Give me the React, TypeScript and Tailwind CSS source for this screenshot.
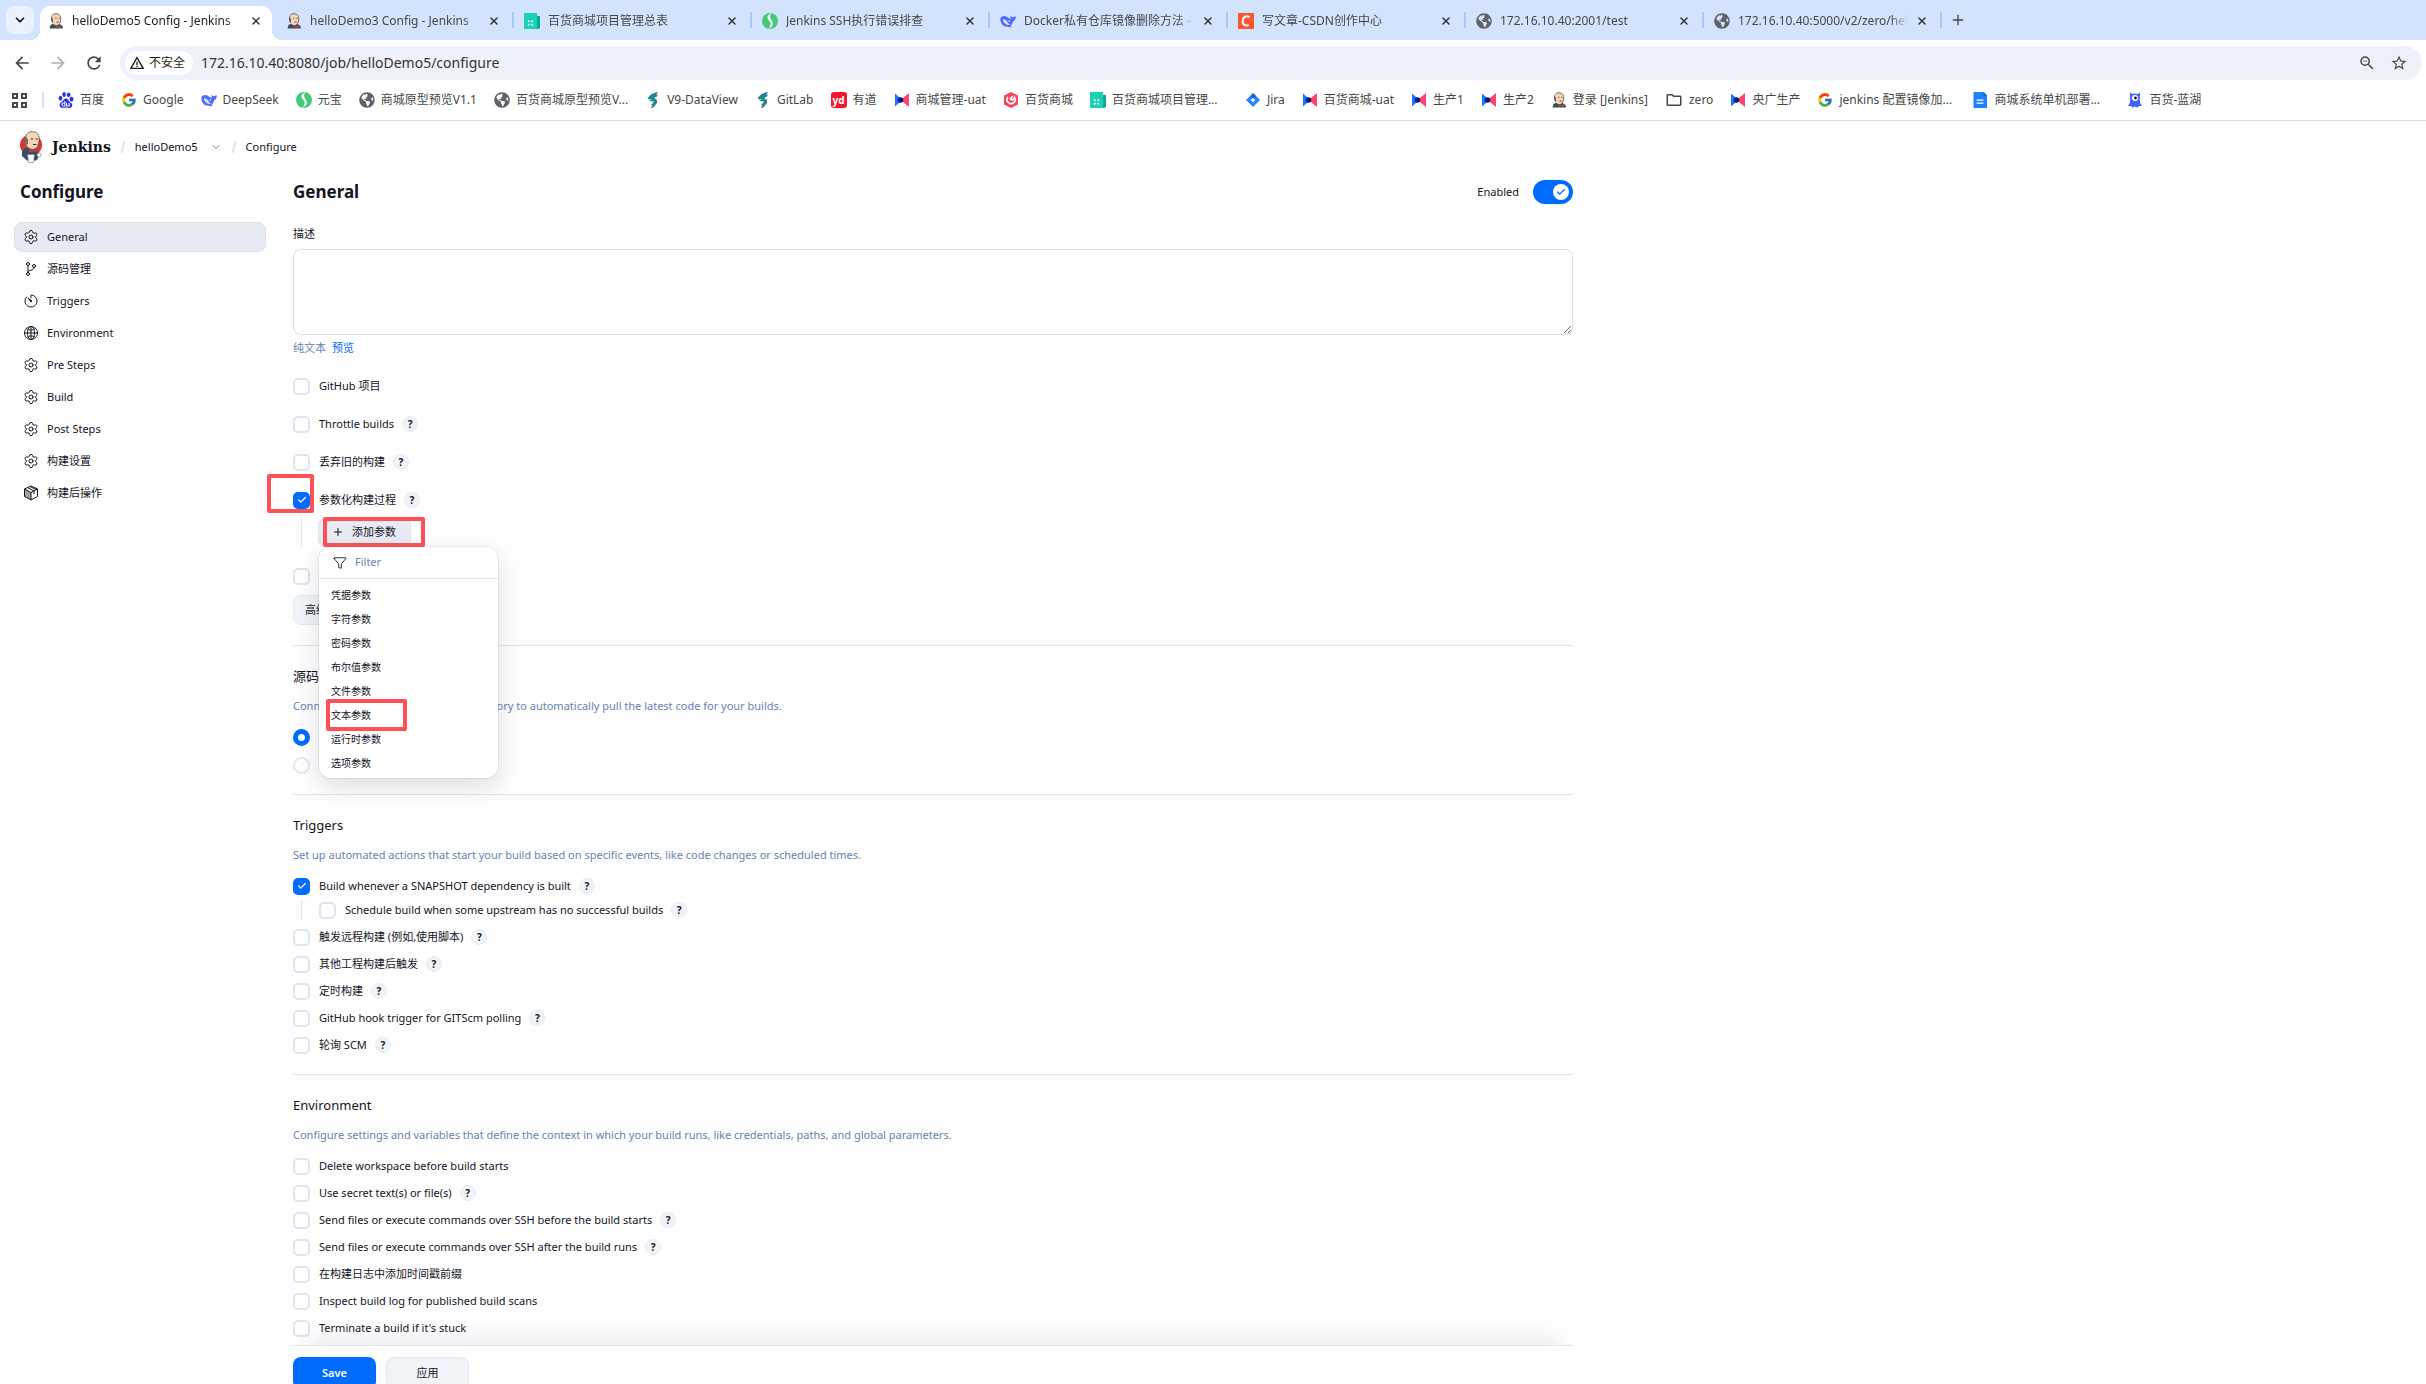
import React from 'react'
import clsx from 'clsx'
import { Check, Plus, Settings, X, ChevronDown } from 'lucide-react'
import { FcGoogle } from 'react-icons/fc'
import { SiBaidu } from 'react-icons/si'
import { FaGlobeAmericas } from 'react-icons/fa'
import {
  MdArrowBack,
  MdArrowForward,
  MdRefresh,
  MdWarningAmber,
  MdZoomOut,
  MdStarBorder,
  MdOutlineFolder,
} from 'react-icons/md'
import { IoTimerOutline, IoGlobeOutline, IoFunnelOutline, IoGitBranchOutline } from 'react-icons/io5'

/* ---------- Favicons ---------- */

const ButlerIcon = () => (
  <svg viewBox="0 0 16 16" className="size-4">
    <path d="M1.5 15.5 2.5 12l4-2 5 1 3 2 .5 2.5z" fill="#335061" />
    <path d="M4 2.5C5 .8 7.500.4 9.500.9c2.400.6 3.500 2.800 3.300 5.200-.2 2.300-.7 4.500-2.300 5.600-1.800 1-4.300.4-5.500-1.200C3.500 8.700 2.800 5 4 2.500z" fill="#f0d6b7" />
    <path d="M4 2.500C3 3.700 2.700 5.700 3.200 7.700l1 2.300.8-.5V6.200L4.200 5z" fill="#6b5a4c" />
    <path d="M4 2.500C5 .8 7.500.4 9.500.9c2.400.6 3.500 2.800 3.300 5.200-.2 2.300-.7 4.500-2.300 5.600" fill="none" stroke="#4a3a30" strokeWidth=".7" />
    <path d="M7.300 5.300h1.200M10.300 5.300h1.200M8.500 9h2.300" stroke="#4a3a30" strokeWidth=".8" />
    <path d="m7.500 12 2.300 1.200 2.700-1.200.3 3-3-1-2.300 1z" fill="#d33833" />
  </svg>
)

const GlobeIcon = () => <FaGlobeAmericas className="size-4 text-[#5f6368]" />

const SheetIcon = () => (
  <svg viewBox="0 0 16 16" className="size-4">
    <path d="M9 3h7v11.500l-1.500 1.500H9z" fill="#0aa896" />
    <path d="M0 0h13v16H0z" fill="#1ad1b5" />
    <path d="m4 7.500 1.500 1.500M9 7.500 7.500 9M4 12.500 5.500 11M9 12.500 7.500 11" stroke="#fff" strokeWidth="1.500" />
  </svg>
)

const YuanbaoIcon = () => (
  <svg viewBox="0 0 16 16" className="size-4">
    <circle cx="8" cy="8" r="8" fill="#45c877" />
    <path d="M9.500 0C5 2 4.500 5 7 7.500S9 14 5.500 16C9 15 12.500 12 10 8S7.500 3 9.500 0z" fill="#fff" />
  </svg>
)

const DeepSeekIcon = () => (
  <svg viewBox="0 0 16 16" className="size-4">
    <path d="M.3 5.500C1 3 4 2.300 6.300 3.500c2 1 2.500 2 4.200 2.500V2.500c.6 1.200 1.300 1.700 2.200 1.700 1.200 0 2-.9 3-1 .3 2.300-.7 4.300-2.500 5-.5 2.100-1.400 3.600-2.700 4.500l1.200 1.300c-2 .4-3.200 0-4.500-.4C3.500 14 .3 11 .3 5.500z" fill="#4d6bfe" />
    <path d="M3 6.500c1.800-.6 3.200.5 4.300 2.300 1 1.500 1.700 2.500 2.700 3-1.500.6-3.200.3-4.700-1S2.900 8 3 6.500z" fill="#d3e3fd" />
    <circle cx="9.300" cy="8" r=".8" fill="#fff" />
  </svg>
)

const CsdnIcon = () => (
  <svg viewBox="0 0 16 16" className="size-4">
    <path d="M0 0h16v16H0z" fill="#fc5531" />
    <path d="M11.500 4.200C8.500 2.300 5 3.800 4.700 7.500c-.4 4.200 2.700 6 6.300 4.300" fill="none" stroke="#fff" strokeWidth="2" />
  </svg>
)

const DragonIcon = () => (
  <svg viewBox="0 0 16 16" className="size-4">
    <path d="M3 5.500 6.500 2 12 .5 10.500 3l2.500-.5-1 2-3 1.500 2.500 1.500.5 3-2 3L6.500 16l1-3-2 .5 2.500-2.500 1-1.500L4 9l3-2-3.500.5z" fill="#188a8d" />
    <path d="m9 1 4-1-2 3zM6 15.500l2-2 1.500.5L7 16zM11.500 7.500 12 10.500l-1.500 2z" fill="#4b4f9b" />
  </svg>
)

const YoudaoIcon = () => (
  <span className="flex size-4 items-center justify-center rounded-[3px] bg-[#f5152e] text-[10px] leading-none font-bold text-white">
    yd
  </span>
)

const MallIcon = () => (
  <svg viewBox="0 0 16 16" className="size-4">
    <path d="M1 1.500 8.500 8 1 14.500z" fill="#1677ff" />
    <path d="M15 1v14L6.500 8z" fill="#ff4070" />
    <circle cx="6.500" cy="8" r="2.800" fill="#0a1a7a" />
  </svg>
)

const HexIcon = () => (
  <svg viewBox="0 0 16 16" className="size-4">
    <path d="m8 0 7 3.500v9L8 16l-7-3.500v-9z" fill="#f5455c" />
    <path d="M5 5a4 4 0 1 0 6.500.5c-.7 2.500-2.500 3-4 1.500l2-3" fill="none" stroke="#fff" strokeWidth="1.700" />
  </svg>
)

const JiraIcon = () => (
  <svg viewBox="0 0 16 16" className="size-4">
    <path d="m8 1 7 7-7 7-7-7z" fill="#2684ff" />
    <path d="m8 1 3.500 3.500L8 8 6 4.500z" fill="#1563dc" />
    <path d="m8 5.800 2.200 2.200L8 10.200 5.800 8z" fill="#fff" />
  </svg>
)

const DocIcon = () => (
  <svg viewBox="0 0 16 16" className="size-4">
    <path d="M1.500 0h10L15 3.500V16H1.500z" fill="#1e80ff" />
    <path d="M11.500 0 15 3.500h-3.500z" fill="#0a5bd6" />
    <path d="M4.500 8.200h7M4.500 11.200h7" stroke="#fff" strokeWidth="1.200" />
  </svg>
)

const LanhuIcon = () => (
  <svg viewBox="0 0 16 16" className="size-4">
    <path d="M3 .5 5.500 2a6 6 0 0 1 5 0L13 .5l-.2 5 .2 5 2 3.500h-3l-1.500 1.500L8 14.500l-2.500 1L4 14H1l2-3.500.2-5z" fill="#3f66f5" />
    <circle cx="8" cy="6" r="3" fill="#fff" />
    <circle cx="8.500" cy="6" r="1.400" fill="#111" />
  </svg>
)

const JenkinsLogo = () => (
  <svg viewBox="0 0 22 32" className="h-8 w-[22px]">
    <ellipse cx="11" cy="14" rx="11" ry="10.500" fill="#d33833" />
    <path d="M2 25c-.5-4 .5-7 4-8l9 .5c3 1 4 4 4.500 7l-3 5H7z" fill="#335061" />
    <path d="M6 4c1.500-3 5.500-4 9-3 4 1.500 4.500 5 4 9-.5 4-1.500 7-4.500 8-3 .8-6.500-.5-8-3C4.500 12 4.500 7 6 4z" fill="#f0d6b7" />
    <path d="M6 4c1.500-3 5.500-4 9-3 4 1.500 4.500 5 4 9-.5 4-1.500 7-4.500 8-3 .8-6.500-.5-8-3C4.500 12 4.500 7 6 4z" fill="none" stroke="#5a4a3e" strokeWidth=".7" />
    <path d="M6 5c-1.500 3-1 6.500.5 9l1.500-1V9z" fill="#7a6a5a" />
    <path d="M11 8h2M15.500 8h2M13 13.500h3.500" stroke="#3a2a20" />
    <path d="m9 17.500 4 1.500 4-1 .5 3.500-4-1-4 1z" fill="#d33833" />
    <path d="M7.500 23.500h7l-1 8h-5z" fill="#fff" stroke="#6d7680" strokeWidth=".6" />
    <circle cx="19" cy="24" r="2" fill="#fff" stroke="#6d7680" strokeWidth=".6" />
  </svg>
)

const PackageIcon = () => (
  <svg viewBox="0 0 16 16" className="size-4" fill="none" stroke="currentColor">
    <path d="M8 1 14.500 4v7.500L8 15l-6.500-3.500V4z" />
    <path d="M1.500 4 8 7.500 14.500 4M8 7.500V15M4.500 2.500 11 6v3M7 1.500l6 3" />
    <path d="M1.500 4 8 7.500V15l-6.500-3.500z" fill="currentColor" fillOpacity=".4" stroke="none" />
  </svg>
)

/* ---------- Browser chrome ---------- */

const tabs = [
  { title: 'helloDemo5 Config - Jenkins', icon: <ButlerIcon />, active: true },
  { title: 'helloDemo3 Config - Jenkins', icon: <ButlerIcon /> },
  { title: '百货商城项目管理总表', icon: <SheetIcon /> },
  { title: 'Jenkins SSH执行错误排查', icon: <YuanbaoIcon /> },
  { title: 'Docker私有仓库镜像删除方法 - DeepSeek', icon: <DeepSeekIcon /> },
  { title: '写文章-CSDN创作中心', icon: <CsdnIcon /> },
  { title: '172.16.10.40:2001/test', icon: <GlobeIcon /> },
  { title: '172.16.10.40:5000/v2/zero/hello', icon: <GlobeIcon /> },
]

const bookmarks = [
  { title: '百度', icon: <SiBaidu className="size-4 text-[#2932e1]" /> },
  { title: 'Google', icon: <FcGoogle className="size-4" /> },
  { title: 'DeepSeek', icon: <DeepSeekIcon /> },
  { title: '元宝', icon: <YuanbaoIcon /> },
  { title: '商城原型预览V1.1', icon: <GlobeIcon /> },
  { title: '百货商城原型预览V...', icon: <GlobeIcon /> },
  { title: 'V9-DataView', icon: <DragonIcon /> },
  { title: 'GitLab', icon: <DragonIcon /> },
  { title: '有道', icon: <YoudaoIcon /> },
  { title: '商城管理-uat', icon: <MallIcon /> },
  { title: '百货商城', icon: <HexIcon /> },
  { title: '百货商城项目管理...', icon: <SheetIcon />, wide: true },
  { title: 'Jira', icon: <JiraIcon /> },
  { title: '百货商城-uat', icon: <MallIcon /> },
  { title: '生产1', icon: <MallIcon /> },
  { title: '生产2', icon: <MallIcon /> },
  { title: '登录 [Jenkins]', icon: <ButlerIcon /> },
  { title: 'zero', icon: <MdOutlineFolder className="size-[18px] text-[#474747]" /> },
  { title: '央广生产', icon: <MallIcon /> },
  { title: 'jenkins 配置镜像加...', icon: <FcGoogle className="size-4" />, wide: true },
  { title: '商城系统单机部署...', icon: <DocIcon />, wide: true },
  { title: '百货-蓝湖', icon: <LanhuIcon /> },
]

function TabStrip() {
  return (
    <div className="flex h-10 bg-[#d3e3fd] pl-1.5">
      <button aria-label="搜索标签页" className="mt-1.5 mr-1.5 flex h-7 w-7 items-center justify-center rounded-lg bg-[#ebf1fd]">
        <ChevronDown className="size-3.5" strokeWidth={3} />
      </button>
      {tabs.map((tab) => (
        <div key={tab.title} className="relative w-[238px] shrink-0 pt-1.5">
          <div
            className={clsx(
              'mr-1.5 flex h-[34px] items-center rounded-t-[10px] pr-2 pb-1 pl-2',
              tab.active
                ? "bg-white text-[#1f1f1f] before:absolute before:bottom-0 before:-left-2.5 before:size-2.5 before:bg-[radial-gradient(circle_at_0_0,transparent_10px,white_10px)] after:absolute after:right-[-4px] after:bottom-0 after:size-2.5 after:bg-[radial-gradient(circle_at_100%_0,transparent_10px,white_10px)]"
                : 'text-[#474747]',
            )}
          >
            <span className="flex size-4 shrink-0">{tab.icon}</span>
            <span className="ml-2 w-[170px] overflow-hidden text-xs whitespace-nowrap [mask-image:linear-gradient(to_right,black_90%,transparent)]">
              {tab.title}
            </span>
            <button aria-label="关闭" className="ml-auto flex size-4 items-center justify-center text-[#333]">
              <X className="size-3" strokeWidth={3} />
            </button>
          </div>
          {!tab.active && <span className="absolute top-3 right-[2px] h-4 w-0.5 bg-[#a8c7fa]" />}
        </div>
      ))}
      <button aria-label="新标签页" className="mt-3 ml-1.5 flex size-4 items-center justify-center text-[#474747]">
        <Plus className="size-4" />
      </button>
    </div>
  )
}

function AddressBar() {
  return (
    <div className="flex items-center bg-white pt-1.5 pr-1 pl-3 text-[#474747]">
      <button aria-label="后退" className="mr-4"><MdArrowBack className="size-5" /></button>
      <button aria-label="前进" className="mr-4 text-[#b0b0b0]"><MdArrowForward className="size-5" /></button>
      <button aria-label="刷新"><MdRefresh className="size-5" /></button>
      <div className="ml-4 flex h-[34px] flex-1 items-center rounded-full bg-[#edf1fa] pr-3.5 pl-[5px]">
        <button className="flex h-6 items-center gap-1 rounded-full bg-white pr-2 pl-1 text-xs text-[#1f1f1f]">
          <MdWarningAmber className="size-4" />
          不安全
        </button>
        <input
          aria-label="地址"
          defaultValue="172.16.10.40:8080/job/helloDemo5/configure"
          className="ml-2 flex-1 bg-transparent text-sm text-[#333] outline-none"
        />
        <button aria-label="缩小"><MdZoomOut className="size-[18px]" /></button>
        <button aria-label="收藏" className="ml-3.5"><MdStarBorder className="size-[18px]" /></button>
      </div>
    </div>
  )
}

function BookmarkBar() {
  return (
    <nav className="flex h-[41px] items-center border-b border-[#dcdee1] bg-white pl-3 text-xs text-[#474747]">
      <button aria-label="应用" className="grid size-[15px] grid-cols-2 gap-[3px]">
        <span className="border-2" />
        <span className="border-2" />
        <span className="border-2" />
        <span className="border-2" />
      </button>
      <span className="mr-3.5 ml-[15px] h-4 w-0.5 bg-[#d3e3fd]" />
      {bookmarks.map((mark) => (
        <a
          key={mark.title}
          href="#"
          className={clsx('flex shrink-0 items-center gap-1.5 whitespace-nowrap', mark.wide ? 'w-[155px]' : 'pr-[17px]')}
        >
          {mark.icon}
          {mark.title}
        </a>
      ))}
    </nav>
  )
}

/* ---------- Form parts ---------- */

function Help() {
  return (
    <button
      aria-label="帮助"
      className="ml-2 flex size-4 items-center justify-center rounded-full border border-[#e8ecf2] bg-[#f0f3f7] text-[10px] leading-none font-bold"
    >
      ?
    </button>
  )
}

type OptionProps = {
  id: string
  label: string
  checked?: boolean
  help?: boolean
  className?: string
  children?: React.ReactNode
}

function CheckRow({ id, label, checked, help, className, children }: OptionProps) {
  return (
    <div className={clsx('relative flex h-5 items-center', className)}>
      <span className="grid size-[17px] place-items-center">
        <input
          id={id}
          type="checkbox"
          defaultChecked={checked}
          className="peer col-start-1 row-start-1 size-[17px] appearance-none rounded-[5px] border-2 border-[#dfe4f0] bg-white checked:border-[#006bff] checked:bg-[#006bff]"
        />
        <Check className="pointer-events-none col-start-1 row-start-1 hidden size-2.5 text-white peer-checked:block" strokeWidth={3} />
      </span>
      <label htmlFor={id} className="pl-[9px] whitespace-nowrap">{label}</label>
      {help && <Help />}
      {children}
    </div>
  )
}

function RadioRow({ id, label, checked, className }: OptionProps) {
  return (
    <div className={clsx('flex h-5 items-center', className)}>
      <input
        id={id}
        type="radio"
        name="scm"
        defaultChecked={checked}
        className="size-[17px] appearance-none rounded-full border-2 border-[#e3e8f2] bg-white checked:border-[5px] checked:border-[#006bff]"
      />
      <label htmlFor={id} className="pl-[9px]">{label}</label>
    </div>
  )
}

function Section({ title, description, children }: { title: string; description: string; children: React.ReactNode }) {
  return (
    <section className="border-t border-[#dfe4f0] pt-[18px] pb-[19px]">
      <h2 className="h-6 text-[13px] leading-6">{title}</h2>
      <p className="mt-2.5 mb-[13px] h-4 leading-4 text-[#6684b0]">{description}</p>
      {children}
    </section>
  )
}

/* ---------- Page ---------- */

const gear = <Settings className="size-4" strokeWidth={1.5} />

const sideItems = [
  { title: 'General', icon: gear, active: true },
  { title: '源码管理', icon: <IoGitBranchOutline className="size-4" /> },
  { title: 'Triggers', icon: <IoTimerOutline className="size-4" /> },
  { title: 'Environment', icon: <IoGlobeOutline className="size-4" strokeWidth={16} /> },
  { title: 'Pre Steps', icon: gear },
  { title: 'Build', icon: gear },
  { title: 'Post Steps', icon: gear },
  { title: '构建设置', icon: gear },
  { title: '构建后操作', icon: <PackageIcon /> },
]

const parameterTypes = ['凭据参数', '字符参数', '密码参数', '布尔值参数', '文件参数', '文本参数', '运行时参数', '选项参数']

function Sidebar() {
  return (
    <aside className="w-[266px] shrink-0 pl-3.5">
      <h1 className="mb-[11px] h-[38px] pl-1.5 text-[17px] leading-[38px] font-bold">Configure</h1>
      <nav className="flex flex-col gap-0.5">
        {sideItems.map((item) => (
          <a
            key={item.title}
            href="#"
            className={clsx(
              'flex h-[30px] items-center gap-2 rounded-lg border px-2',
              item.active ? 'border-[#dce2ec] bg-[#e6eaf2]' : 'border-transparent',
            )}
          >
            <span className="flex size-4 items-center justify-center">{item.icon}</span>
            {item.title}
          </a>
        ))}
      </nav>
    </aside>
  )
}

function ParameterMenu() {
  return (
    <div className="absolute top-full left-px z-10 w-[179px] rounded-xl bg-white pb-[3px] shadow-[0_0_0_1px_rgba(20,20,60,0.06),0_8px_24px_rgba(20,20,60,0.14)]">
      <div className="flex h-8 items-center border-b border-[#dfe4f0] pl-3.5">
        <IoFunnelOutline className="size-3.5" />
        <input
          aria-label="Filter"
          placeholder="Filter"
          className="ml-2 w-[120px] bg-transparent outline-none placeholder:text-[#6684b0]"
        />
      </div>
      <div className="flex flex-col pt-1 text-[10px]">
        {parameterTypes.map((name) => (
          <button key={name} className="relative h-6 pl-3 text-left">
            {name}
            {name === '文本参数' && (
              <span className="absolute -top-1 left-[7px] h-8 w-[81px] rounded-[2px] border-4 border-[#fd5155]" />
            )}
          </button>
        ))}
      </div>
    </div>
  )
}

function GeneralForm() {
  return (
    <section className="pb-5">
      <div className="flex h-[38px] items-center justify-between">
        <h2 className="text-[17px] font-bold">General</h2>
        <label className="flex items-center gap-3.5">
          Enabled
          <span className="grid h-6 w-10 items-center">
            <input type="checkbox" defaultChecked className="col-start-1 row-start-1 h-6 w-10 appearance-none rounded-full bg-[#006bff]" />
            <span className="pointer-events-none z-10 col-start-1 row-start-1 mr-1 flex size-4 items-center justify-center justify-self-end rounded-full bg-white">
              <Check className="size-2.5 text-[#006bff]" strokeWidth={3} />
            </span>
          </span>
        </label>
      </div>
      <label htmlFor="description" className="mt-3 block h-[22px] leading-[22px]">描述</label>
      <textarea id="description" className="mt-1 block h-[86px] w-full rounded-lg border border-[#d9dfeb] bg-white" />
      <div className="mt-[5px] mb-5 flex h-4 items-center gap-1.5 text-[#6684b0]">
        纯文本
        <a href="#" className="text-[#006bff]">预览</a>
      </div>

      <div className="flex flex-col gap-[18px]">
        <CheckRow id="github" label="GitHub 项目" />
        <CheckRow id="throttle" label="Throttle builds" help />
        <CheckRow id="discard" label="丢弃旧的构建" help />
        <CheckRow id="params" label="参数化构建过程" help checked>
          <span className="pointer-events-none absolute -top-4 left-[-26px] h-[39px] w-[47px] rounded-[2px] border-4 border-[#fd5155]" />
        </CheckRow>
      </div>

      {/* Parámetros de la construcción */}
      <div className="mt-[7px] ml-2 border-l border-[#dfe4f0] pl-4">
        <div className="relative w-fit">
          <button className="flex h-[30px] w-[93px] items-center gap-2 rounded-lg border border-[#dfe4ee] bg-[#e7ebf3] pl-[13px]">
            <Plus className="size-3" strokeWidth={2} />
            添加参数
          </button>
          <span className="pointer-events-none absolute top-0 left-[5px] h-[30px] w-[102px] rounded-[2px] border-4 border-[#fd5155]" />
          <ParameterMenu />
        </div>
      </div>

      <CheckRow id="concurrent" label="在必要的时候并发构建" className="mt-[19px]" />
      <button className="mt-[9px] flex h-[30px] items-center gap-2 rounded-lg border border-[#e3e8f0] bg-[#f0f3f7] px-[11px]">
        高级
        <ChevronDown className="size-3" />
      </button>
    </section>
  )
}

export default function App() {
  return (
    <div className='h-screen overflow-hidden bg-[#fefefe] font-["Noto_Sans","Noto_Sans_CJK_SC",sans-serif] text-[11px] text-[#14141f]'>
      <TabStrip />
      <AddressBar />
      <BookmarkBar />

      {/* Cabecera con la ruta */}
      <header className="flex h-[52px] items-center pl-5">
        <JenkinsLogo />
        <span className='ml-2.5 font-["DejaVu_Serif",serif] text-sm font-bold'>Jenkins</span>
        <span className="mx-[11px] h-3 w-0.5 rotate-[15deg] bg-[#dfe4f0]" />
        <a href="#">helloDemo5</a>
        <ChevronDown className="ml-3 size-3 text-[#6684b0]" />
        <span className="mx-[11px] h-3 w-0.5 rotate-[15deg] bg-[#dfe4f0]" />
        <a href="#">Configure</a>
      </header>

      <div className="flex">
        <Sidebar />
        <main className="ml-[27px] w-full max-w-[1280px]">
          <GeneralForm />

          <Section
            title="源码管理"
            description="Connect and manage your code repository to automatically pull the latest code for your builds."
          >
            <RadioRow id="scm-none" label="无" checked />
            <RadioRow id="scm-git" label="Git" className="mt-2" />
          </Section>

          <Section
            title="Triggers"
            description="Set up automated actions that start your build based on specific events, like code changes or scheduled times."
          >
            <CheckRow id="snapshot" label="Build whenever a SNAPSHOT dependency is built" help checked />
            <div className="mt-1 mb-[7px] ml-2 border-l border-[#dfe4f0] pl-[17px]">
              <CheckRow id="upstream" label="Schedule build when some upstream has no successful builds" help />
            </div>
            <div className="flex flex-col gap-[7px]">
              <CheckRow id="remote" label="触发远程构建 (例如,使用脚本)" help />
              <CheckRow id="after" label="其他工程构建后触发" help />
              <CheckRow id="timer" label="定时构建" help />
              <CheckRow id="hook" label="GitHub hook trigger for GITScm polling" help />
              <CheckRow id="poll" label="轮询 SCM" help />
            </div>
          </Section>

          <Section
            title="Environment"
            description="Configure settings and variables that define the context in which your build runs, like credentials, paths, and global parameters."
          >
            <div className="-mb-3 flex flex-col gap-[7px]">
              <CheckRow id="wipe" label="Delete workspace before build starts" />
              <CheckRow id="secret" label="Use secret text(s) or file(s)" help />
              <CheckRow id="ssh-before" label="Send files or execute commands over SSH before the build starts" help />
              <CheckRow id="ssh-after" label="Send files or execute commands over SSH after the build runs" help />
              <CheckRow id="timestamps" label="在构建日志中添加时间戳前缀" />
              <CheckRow id="scans" label="Inspect build log for published build scans" />
              <CheckRow id="stuck" label="Terminate a build if it's stuck" />
            </div>
          </Section>

          <div className="relative flex gap-2.5 border-t border-[#dfe4f0] bg-[#fefefe] pt-[11px] shadow-[0_-20px_20px_-14px_rgba(30,40,90,0.1)]">
            <button className="h-8 w-[83px] rounded-lg bg-[#006bff] font-semibold text-white">Save</button>
            <button className="h-8 w-[83px] rounded-lg border border-[#e3e8f0] bg-[#f0f3f7]">应用</button>
          </div>
        </main>
      </div>
    </div>
  )
}
